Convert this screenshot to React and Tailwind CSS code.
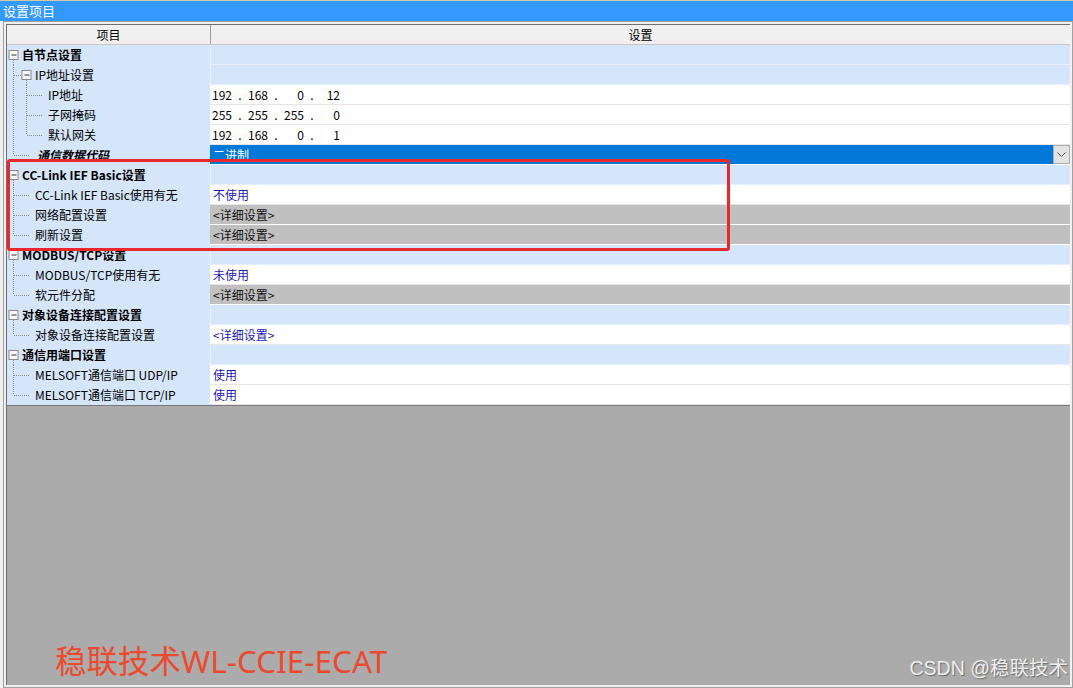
import React from 'react';

// tree rows of the settings list
const rows = [
  { kind: 'group', label: '自节点设置', value: { type: 'blank' } },
  { kind: 'sub', label: 'IP地址设置', value: { type: 'blank' } },
  { kind: 'leaf2', label: 'IP地址', value: { type: 'ip', parts: ['192', '168', '0', '12'] } },
  { kind: 'leaf2', label: '子网掩码', value: { type: 'ip', parts: ['255', '255', '255', '0'] } },
  { kind: 'leaf2', last: true, label: '默认网关', value: { type: 'ip', parts: ['192', '168', '0', '1'] } },
  { kind: 'leaf1', last: true, label: '通信数据代码', italic: true, value: { type: 'select', text: '二进制' } },
  { kind: 'group', label: 'CC-Link IEF Basic设置', value: { type: 'blank' } },
  { kind: 'leaf1', label: 'CC-Link IEF Basic使用有无', value: { type: 'text', text: '不使用' } },
  { kind: 'leaf1', label: '网络配置设置', value: { type: 'detail' } },
  { kind: 'leaf1', last: true, label: '刷新设置', value: { type: 'detail' } },
  { kind: 'group', label: 'MODBUS/TCP设置', value: { type: 'blank' } },
  { kind: 'leaf1', label: 'MODBUS/TCP使用有无', value: { type: 'text', text: '未使用' } },
  { kind: 'leaf1', last: true, label: '软元件分配', value: { type: 'detail' } },
  { kind: 'group', label: '对象设备连接配置设置', value: { type: 'blank' } },
  { kind: 'leaf1', last: true, label: '对象设备连接配置设置', value: { type: 'text', text: '<详细设置>' } },
  { kind: 'group', label: '通信用端口设置', value: { type: 'blank' } },
  { kind: 'leaf1', label: 'MELSOFT通信端口 UDP/IP', value: { type: 'text', text: '使用' } },
  { kind: 'leaf1', last: true, label: 'MELSOFT通信端口 TCP/IP', value: { type: 'text', text: '使用' } },
];

const dot = { stroke: '#8a8a8a', strokeWidth: 1, strokeDasharray: '1 1' };

const Box = ({ cx }) => (
  <g>
    <rect x={cx - 4.5} y={5.5} width={9} height={9} fill="#f7f7f7" stroke="#8c8c8c" />
    <line x1={cx - 2} y1={10} x2={cx + 3} y2={10} stroke="#333" />
  </g>
);

const TreeLines = ({ kind, last }) => (
  <svg width="48" height="20" className="absolute left-0 top-0">
    {kind === 'group' && (
      <>
        <line x1="6.5" y1="15" x2="6.5" y2="20" {...dot} />
        <Box cx={6.5} />
      </>
    )}
    {kind === 'sub' && (
      <>
        <line x1="6.5" y1="0" x2="6.5" y2="20" {...dot} />
        <line x1="7" y1="10.5" x2="15" y2="10.5" {...dot} />
        <line x1="19.5" y1="15" x2="19.5" y2="20" {...dot} />
        <Box cx={19.5} />
      </>
    )}
    {kind === 'leaf2' && (
      <>
        <line x1="6.5" y1="0" x2="6.5" y2="20" {...dot} />
        <line x1="19.5" y1="0" x2="19.5" y2={last ? 10 : 20} {...dot} />
        <line x1="20" y1="10.5" x2="35" y2="10.5" {...dot} />
      </>
    )}
    {kind === 'leaf1' && (
      <>
        <line x1="6.5" y1="0" x2="6.5" y2={last ? 10 : 20} {...dot} />
        <line x1="7" y1="10.5" x2="22" y2="10.5" {...dot} />
      </>
    )}
  </svg>
);

const IpValue = ({ parts }) => (
  <div className="flex pl-[2px]">
    {parts.map((p, i) => (
      <React.Fragment key={i}>
        <span className="w-[20px] text-right">{p}</span>
        {i < 3 && <span className="w-[16px] text-center">.</span>}
      </React.Fragment>
    ))}
  </div>
);

const ValueCell = ({ value }) => {
  if (value.type === 'blank') {
    return <div className="flex-1 h-full bg-[#d5e5fa] border-b border-[#e6effb] border-l border-l-[#e9f1fc]" />;
  }
  if (value.type === 'ip') {
    return (
      <div className="flex-1 h-full bg-white border-b border-[#e6e6e6] text-black">
        <IpValue parts={value.parts} />
      </div>
    );
  }
  if (value.type === 'select') {
    return (
      <div className="flex-1 h-full flex bg-white">
        <div className="flex-1 h-[19px] bg-[#0078d7] text-white pl-[3px] leading-[19px]">{value.text}</div>
        <div className="w-[17px] h-[19px] bg-[#e3e3e3] border border-[#adadad] flex items-center justify-center">
          <svg width="9" height="6" viewBox="0 0 9 6">
            <path d="M0.5 0.5 L4.5 4.5 L8.5 0.5" fill="none" stroke="#555" strokeWidth="1" />
          </svg>
        </div>
      </div>
    );
  }
  if (value.type === 'detail') {
    return (
      <div className="flex-1 h-full bg-[#c0c0c0] border-b border-white text-[#111] pl-[3px]">&lt;详细设置&gt;</div>
    );
  }
  return (
    <div className="flex-1 h-full bg-white border-b border-[#e6e6e6] text-[#1a1ab0] pl-[3px]">{value.text}</div>
  );
};

const textIndent = {
  group: 'pl-[15px] font-bold',
  sub: 'pl-[28px]',
  leaf1: 'pl-[28px]',
  leaf2: 'pl-[41px]',
};

const Row = ({ row }) => (
  <div className="flex h-[20px] leading-[20px]">
    <div className={`relative w-[203px] h-full bg-[#d5e5fa] text-black whitespace-pre ${textIndent[row.kind]} ${row.italic ? 'font-bold italic !pl-[30px]' : ''}`}>
      <TreeLines kind={row.kind} last={row.last} />
      {row.label}
    </div>
    <ValueCell value={row.value} />
  </div>
);

export default function App() {
  return (
    <div className="relative w-[1073px] h-[688px] bg-[#f0f0f0] overflow-hidden font-['Noto_Sans_CJK_SC',sans-serif] text-[12px]">
      <div className="h-px bg-[#d6c9a6]" />
      <div className="h-[20px] bg-[#3399ff] text-white text-[13px] leading-[20px] pl-[3px]">设置项目</div>

      <div className="ml-[3px] w-[1070px] h-[667px] border border-[#a0a0a0] px-[2px] pb-[2px] pt-[2px] bg-[#f0f0f0]">
        <div className="h-full border-l border-t border-[#6e6e6e] flex flex-col">
          <div className="flex h-[20px] leading-[19px] bg-[#f0f0f0] border-b border-[#c8c8c8] text-black">
            <div className="w-[203px] text-center">项目</div>
            <div className="flex-1 text-center border-l border-[#a0a0a0]">设置</div>
          </div>
          {rows.map((row, i) => (
            <Row key={i} row={row} />
          ))}
          <div className="flex-1 bg-[#ababab] border-t border-[#7a7a7a]" />
        </div>
      </div>

      {/* highlight frame */}
      <div className="absolute left-[7px] top-[159px] w-[723px] h-[92px] border-[3px] border-[#e8282a] rounded-[3px]" />

      {/* watermarks */}
      <div className="absolute left-[55px] top-[641px] text-[31.5px] leading-[40px] text-[#ec4a2e] whitespace-nowrap font-['Noto_Sans','Noto_Sans_CJK_SC',sans-serif]">
        稳联技术WL-CCIE-ECAT
      </div>
      <div className="absolute right-[5px] top-[653px] text-[19.5px] leading-[30px] text-[#eeeeee] whitespace-nowrap font-['Liberation_Sans','Noto_Sans_CJK_SC',sans-serif] [text-shadow:1px_1px_1px_#6a6a6a]">
        CSDN @稳联技术
      </div>
    </div>
  );
}
